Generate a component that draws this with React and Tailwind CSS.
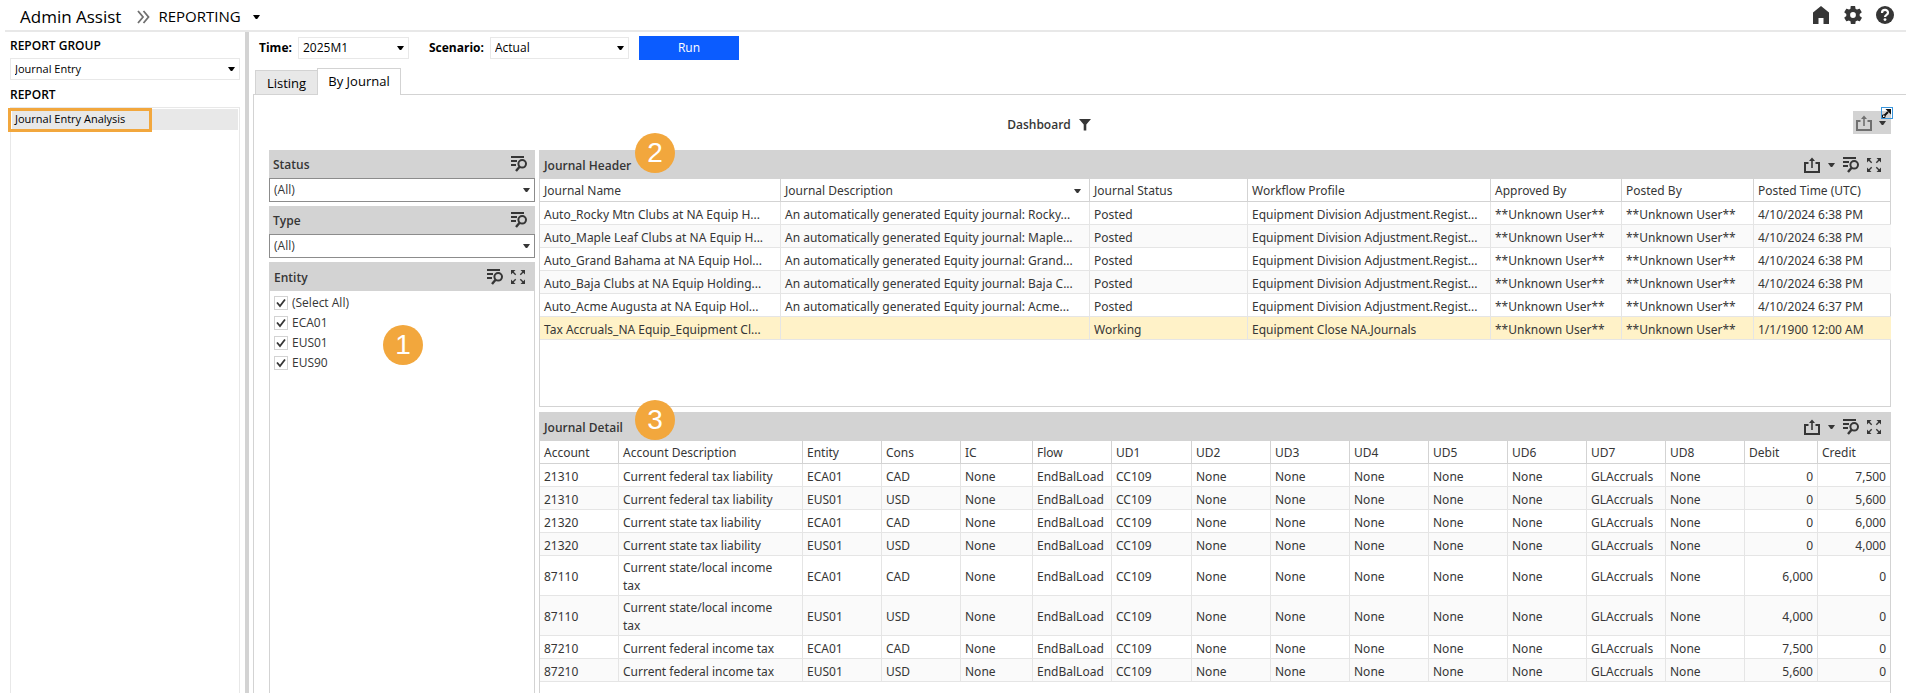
const journalColumns = [
  { label: "Journal Name", width: "w-[241px]" },
  { label: "Journal Description", width: "w-[309px]", sorted: true },
  { label: "Journal Status", width: "w-[158px]" },
  { label: "Workflow Profile", width: "w-[243px]" },
  { label: "Approved By", width: "w-[131px]" },
  { label: "Posted By", width: "w-[132px]" },
  { label: "Posted Time (UTC)", width: "w-[137px]" },
];

const USER = "**Unknown User**";
const PROFILE = "Equipment Division Adjustment.Regist...";

const journals = [
  ["Auto_Rocky Mtn Clubs at NA Equip H...", "An automatically generated Equity journal: Rocky...", "Posted", PROFILE, USER, USER, "4/10/2024 6:38 PM"],
  ["Auto_Maple Leaf Clubs at NA Equip H...", "An automatically generated Equity journal: Maple...", "Posted", PROFILE, USER, USER, "4/10/2024 6:38 PM"],
  ["Auto_Grand Bahama at NA Equip Hol...", "An automatically generated Equity journal: Grand...", "Posted", PROFILE, USER, USER, "4/10/2024 6:38 PM"],
  ["Auto_Baja Clubs at NA Equip Holding...", "An automatically generated Equity journal: Baja C...", "Posted", PROFILE, USER, USER, "4/10/2024 6:38 PM"],
  ["Auto_Acme Augusta at NA Equip Hol...", "An automatically generated Equity journal: Acme...", "Posted", PROFILE, USER, USER, "4/10/2024 6:37 PM"],
  ["Tax Accruals_NA Equip_Equipment Cl...", "", "Working", "Equipment Close NA.Journals", USER, USER, "1/1/1900 12:00 AM"],
];

const detailColumns = [
  { label: "Account", width: "w-[79px]" },
  { label: "Account Description", width: "w-[184px]", align: "pr-5" },
  { label: "Entity", width: "w-[79px]" },
  { label: "Cons", width: "w-[79px]" },
  { label: "IC", width: "w-[72px]" },
  { label: "Flow", width: "w-[79px]" },
  { label: "UD1", width: "w-[80px]" },
  { label: "UD2", width: "w-[79px]" },
  { label: "UD3", width: "w-[79px]" },
  { label: "UD4", width: "w-[79px]" },
  { label: "UD5", width: "w-[79px]" },
  { label: "UD6", width: "w-[79px]" },
  { label: "UD7", width: "w-[79px]" },
  { label: "UD8", width: "w-[79px]" },
  { label: "Debit", width: "w-[73px]", align: "pr-1 text-right" },
  { label: "Credit", width: "w-[72px]", align: "pr-1 text-right" },
];

const lines = [
  ["21310", "Current federal tax liability", "ECA01", "CAD", "0", "7,500"],
  ["21310", "Current federal tax liability", "EUS01", "USD", "0", "5,600"],
  ["21320", "Current state tax liability", "ECA01", "CAD", "0", "6,000"],
  ["21320", "Current state tax liability", "EUS01", "USD", "0", "4,000"],
  ["87110", "Current state/local income tax", "ECA01", "CAD", "6,000", "0"],
  ["87110", "Current state/local income tax", "EUS01", "USD", "4,000", "0"],
  ["87210", "Current federal income tax", "ECA01", "CAD", "7,500", "0"],
  ["87210", "Current federal income tax", "EUS01", "USD", "5,600", "0"],
];

// The middle dimensions are the same on every line
const details = lines.map(([account, description, entity, cons, debit, credit]) => [
  account, description, entity, cons, "None", "EndBalLoad", "CC109",
  "None", "None", "None", "None", "None", "GLAccruals", "None", debit, credit,
]);

const entities = ["(Select All)", "ECA01", "EUS01", "EUS90"];

function Caret({ className = "" }) {
  return (
    <svg viewBox="0 0 7 4" className={`h-1 w-[7px] shrink-0 fill-current ${className}`} aria-hidden="true">
      <path d="M0 0h7L4.2 4H2.8z" />
    </svg>
  );
}

function ShareIcon() {
  return (
    <svg viewBox="0 0 16 16" className="size-4" fill="none" stroke="currentColor" strokeWidth="2" aria-hidden="true">
      <path d="M4.500 6H1v9h14V6h-3.500" />
      <path d="M8 11V2" strokeWidth="1.6" />
      <path d="M5 4l3-3.600L11 4z" fill="currentColor" stroke="none" />
    </svg>
  );
}

function FilterIcon() {
  return (
    <svg viewBox="0 0 16 16" className="size-4" fill="none" stroke="currentColor" strokeWidth="2" aria-hidden="true">
      <path d="M0 1h13M0 5h6M0 9h5" />
      <circle cx="11.2" cy="7.8" r="3.8" />
      <path d="M8.6 10.8L5 15" strokeWidth="2.4" />
    </svg>
  );
}

function ExpandIcon() {
  return (
    <svg viewBox="0 0 14 14" className="size-[14px]" fill="currentColor" aria-hidden="true">
      <path d="M0 0h4.500L0 4.500zM14 0v4.500L9.500 0zM14 14H9.500L14 9.500zM0 14V9.500L4.500 14z" />
      <path d="M1 1l3.700 3.700M13 1L9.300 4.700M13 13L9.300 9.300M1 13l3.700-3.700" stroke="currentColor" strokeWidth="1.400" />
    </svg>
  );
}

function IconButton({ label, className = "", children }) {
  return (
    <button type="button" aria-label={label} className={`flex items-center ${className}`}>
      {children}
    </button>
  );
}

function Select({ id, label, value, className }) {
  return (
    <div className={`relative flex ${className}`}>
      <select id={id} aria-label={label} defaultValue={value} className="w-full appearance-none bg-transparent px-1 outline-none">
        <option>{value}</option>
      </select>
      <Caret className="pointer-events-none absolute top-1/2 right-1 -translate-y-1/2" />
    </div>
  );
}

function Marker({ number, className }) {
  return (
    <span className={`absolute flex size-10 items-center justify-center rounded-full bg-[#f2a73d] font-['Liberation_Sans',sans-serif] text-[28px] font-normal text-white ${className}`}>
      {number}
    </span>
  );
}

function PanelHeader({ title, exportable, expand, marker, className = "h-7 pl-1" }) {
  return (
    <div className={`relative flex shrink-0 items-center bg-[#d3d3d3] ${className}`}>
      <h2 className="grow pt-0.5 font-semibold">{title}</h2>
      {marker}
      {exportable && (
        <IconButton label="Export" className="mr-2 gap-2">
          <ShareIcon />
          <Caret />
        </IconButton>
      )}
      <div className={`flex items-center gap-2 ${expand ? "pr-2.5" : "pr-2"}`}>
        <IconButton label="Filter">
          <FilterIcon />
        </IconButton>
        {expand && (
          <IconButton label="Maximize">
            <ExpandIcon />
          </IconButton>
        )}
      </div>
    </div>
  );
}

function DataTable({ label, columns, rows, selected, truncate }) {
  return (
    <table aria-label={label} className="w-full table-fixed border-separate border-spacing-0 font-['Noto_Sans',sans-serif] leading-[18px]">
      <colgroup>
        {columns.map((c) => (
          <col key={c.label} className={c.width} />
        ))}
      </colgroup>
      <thead>
        <tr>
          {columns.map((c) => (
            <th key={c.label} scope="col" className="h-[23px] border-r border-b border-[#d3d3d3] px-1 pt-0.5 text-left font-normal last:border-r-0">
              <div className="flex items-center justify-between whitespace-nowrap">
                {c.label}
                {c.sorted && <Caret className="mr-1" />}
              </div>
            </th>
          ))}
        </tr>
      </thead>
      <tbody>
        {rows.map((row, r) => (
          <tr key={r} className={r === selected ? "bg-[#fff2c8]" : "even:bg-[#fafafa]"}>
            {row.map((cell, c) => (
              <td
                key={c}
                className={`h-[23px] border-r border-b border-[#e5e5e5] pt-[3px] pl-1 last:border-r-0 ${columns[c].align || ""} ${truncate ? "overflow-hidden whitespace-nowrap" : ""}`}
              >
                {cell}
              </td>
            ))}
          </tr>
        ))}
      </tbody>
    </table>
  );
}

function TopBar() {
  return (
    <header className="ml-[5px] flex h-8 items-center justify-between border-b-2 border-[#e8e8e8] pr-3 pl-[15px] text-black">
      <div className="flex items-center pt-[3px]">
        <span className="text-[17px]">Admin Assist</span>
        <svg viewBox="0 0 13 14" className="mr-2 ml-4 h-3.5 w-[13px]" fill="none" stroke="#707070" strokeWidth="1.8" aria-hidden="true">
          <path d="M1 1l5 6-5 6M6.500 1l5 6-5 6" />
        </svg>
        <button type="button" className="flex items-center gap-3 text-[15px]">
          REPORTING
          <Caret />
        </button>
      </div>
      <div className="flex items-center gap-3.5 text-[#363636]">
        <IconButton label="Home">
          <svg viewBox="0 0 18 18" className="size-[18px]" fill="currentColor" aria-hidden="true">
            <path d="M9 0l8 6.500V18h-5.500v-6h-5v6H1V6.500z" />
          </svg>
        </IconButton>
        <IconButton label="Settings">
          <svg viewBox="2 2 20 20" className="size-[18px]" fill="currentColor" aria-hidden="true">
            <path d="M19.400 13a7.500 7.500 0 0 0 0-2l2.100-1.700c.2-.1.200-.4.100-.6l-2-3.500c-.1-.2-.4-.3-.6-.2l-2.500 1a7.300 7.300 0 0 0-1.700-1l-.4-2.600a.5.5 0 0 0-.5-.4h-4a.5.5 0 0 0-.5.400L9.200 5c-.6.300-1.200.600-1.700 1L5 5c-.2-.1-.5 0-.6.200l-2 3.500c-.1.200-.1.500.1.600L4.600 11a7.500 7.500 0 0 0 0 2l-2.100 1.700c-.2.100-.2.400-.1.600l2 3.500c.1.200.4.300.6.200l2.500-1c.5.400 1.100.8 1.700 1l.4 2.600c0 .2.200.4.500.4h4c.3 0 .5-.2.500-.4l.4-2.600c.6-.3 1.200-.6 1.700-1l2.500 1c.2.100.5 0 .6-.2l2-3.500c.1-.2.1-.5-.1-.6zM12 15.200a3.200 3.200 0 1 1 0-6.400 3.200 3.200 0 0 1 0 6.400z" />
          </svg>
        </IconButton>
        <IconButton label="Help">
          <svg viewBox="0 0 18 18" className="size-[18px]" fill="none" aria-hidden="true">
            <circle cx="9" cy="9" r="9" fill="currentColor" />
            <path d="M6 7c0-4 6-4 6-.3C12 9 9 8.800 9 11" stroke="#fff" strokeWidth="2.200" />
            <circle cx="9" cy="13.600" r="1.400" fill="#fff" />
          </svg>
        </IconButton>
      </div>
    </header>
  );
}

function Sidebar() {
  return (
    <aside className="flex w-[245px] shrink-0 flex-col pr-[5px] pl-2.5 text-black">
      <label htmlFor="group" className="pt-[5px] pb-[3px] leading-[18px] font-semibold">REPORT GROUP</label>
      <Select id="group" value="Journal Entry" className="h-[22px] border border-[#e8e8e8] text-[11px]" />
      <h2 className="pt-1.5 pb-[3px] leading-[18px] font-semibold">REPORT</h2>
      <ul className="grow border border-b-0 border-[#e8e8e8] p-px text-[11px]">
        <li className="relative flex h-[21px] items-center bg-[#e8e8e8]">
          <a href="#journal-entry-analysis" className="px-[3px]">Journal Entry Analysis</a>
          <span className="absolute -top-px -left-1 h-6 w-36 border-3 border-[#f2a73d]" />
        </li>
      </ul>
    </aside>
  );
}

function RunBar() {
  return (
    <div className="mb-1 flex h-8 items-center pl-2.5 text-black">
      <label htmlFor="time" className="w-[39px] font-bold">Time:</label>
      <Select id="time" value="2025M1" className="h-[22px] w-[111px] border border-[#e8e8e8]" />
      <label htmlFor="scenario" className="ml-5 w-[61px] font-bold">Scenario:</label>
      <Select id="scenario" value="Actual" className="h-[22px] w-[139px] border border-[#e8e8e8]" />
      <button type="button" className="ml-2.5 h-6 w-[100px] bg-[#0b5cff] text-white">Run</button>
    </div>
  );
}

function DashboardBar() {
  return (
    <div className="flex h-[55px] items-center">
      <div className="flex grow items-center justify-center gap-2 pt-1 pr-6">
        <h1 className="font-semibold">Dashboard</h1>
        <svg viewBox="0 0 12 12" className="size-3 fill-current" aria-hidden="true">
          <path d="M0 0h12L7.300 5.500V11.500H4.700V5.500z" />
        </svg>
      </div>
      <div className="relative flex h-[23px] w-[38px] bg-[#d3d3d3] pl-[3px]">
        <IconButton label="Export dashboard" className="gap-[7px] text-[#707070]">
          <ShareIcon />
          <Caret className="text-[#363636]" />
        </IconButton>
        <button type="button" aria-label="Open in window" className="absolute -top-1 -right-0.5 size-3 border border-[#3a96dd]">
          <svg viewBox="0 0 10 10" className="size-2.5" fill="none" stroke="#111" aria-hidden="true">
            <path d="M2.500 7.500L6 4" strokeWidth="2" />
            <path d="M3.500 1H9v5.500z" fill="#111" stroke="none" />
            <path d="M.5 7h2.500v2.500H.5z" fill="#fff" />
          </svg>
        </button>
      </div>
    </div>
  );
}

function Filters() {
  return (
    <div className="flex w-[266px] shrink-0 flex-col gap-1">
      {["Status", "Type"].map((name) => (
        <section key={name}>
          <PanelHeader title={name} />
          <Select label={name} value="(All)" className="h-6 border border-[#8c8c8c]" />
        </section>
      ))}
      <section className="relative flex grow flex-col">
        <PanelHeader title="Entity" expand className="h-[29px] pl-[5px]" />
        <ul className="grow border-x border-[#d3d3d3] px-1 pt-0.5">
          {entities.map((entity) => (
            <li key={entity}>
              <label className="flex h-5 items-center gap-1">
                <span className="grid size-[14px]">
                  <input type="checkbox" defaultChecked className="peer col-start-1 row-start-1 appearance-none border border-[#d3d3d3]" />
                  <svg viewBox="0 0 14 14" className="pointer-events-none col-start-1 row-start-1 hidden size-[14px] peer-checked:block" fill="none" stroke="#363636" strokeWidth="1.800" aria-hidden="true">
                    <path d="M3 6.500l3 3.500 5-6.500" />
                  </svg>
                </span>
                {entity}
              </label>
            </li>
          ))}
        </ul>
        <Marker number={1} className="top-[63px] left-[114px]" />
      </section>
    </div>
  );
}

export default function App() {
  return (
    <div className="flex min-h-screen flex-col bg-white font-['Open_Sans','Noto_Sans',sans-serif] text-[12px] text-[#363636]">
      <TopBar />
      <div className="flex grow">
        <Sidebar />
        <main className="flex min-w-0 grow flex-col border-l-4 border-[#d3d3d3]">
          <RunBar />
          <nav className="z-10 -mb-px flex items-end pl-1.5 text-[13px] text-black">
            <button type="button" className="h-[25px] w-[62px] border border-r-0 border-[#d3d3d3] bg-[#e8e8e8] pt-0.5">Listing</button>
            <button type="button" className="h-[27px] w-[84px] border border-b-0 border-[#d3d3d3] bg-white">By Journal</button>
          </nav>
          <div className="ml-1 flex grow flex-col border-t border-l border-[#d3d3d3] px-[15px]">
            <DashboardBar />
            <div className="flex grow gap-1">
              <Filters />
              <div className="flex min-w-0 grow flex-col gap-[5px]">
                <section className="flex h-[257px] flex-col">
                  <PanelHeader title="Journal Header" exportable expand className="h-[29px] pl-[5px]" marker={<Marker number={2} className="-top-[17px] left-24" />} />
                  <div className="grow border border-t-0 border-[#d3d3d3]">
                    <DataTable label="Journal Header" columns={journalColumns} rows={journals} selected={5} truncate />
                  </div>
                </section>
                <section className="flex grow flex-col">
                  <PanelHeader title="Journal Detail" exportable expand className="h-[29px] pl-[5px]" marker={<Marker number={3} className="-top-3 left-24" />} />
                  <div className="grow border-x border-[#d3d3d3]">
                    <DataTable label="Journal Detail" columns={detailColumns} rows={details} />
                  </div>
                </section>
              </div>
            </div>
          </div>
        </main>
      </div>
    </div>
  );
}
